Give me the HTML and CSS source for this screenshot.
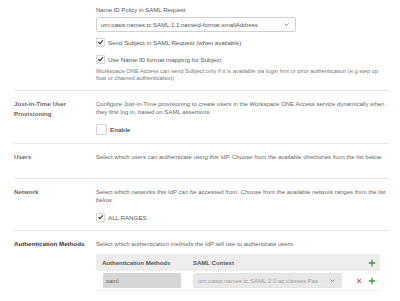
FILE: index.html
```html
<!DOCTYPE html>
<html lang="en">
<head>
  <meta charset="UTF-8" />
  <meta name="viewport" content="width=device-width, initial-scale=1" />
  <title>SAML Identity Provider</title>
  <link rel="stylesheet" href="styles.css">
</head>
<body>
  <div class="page">

    <section class="row row-top">
      <div class="row-label"></div>
      <div class="row-body">
        <div class="field-label">Name ID Policy in SAML Request</div>
        <div class="select">
          <span class="select-text">urn:oasis:names:tc:SAML:1.1:nameid-format:emailAddress</span>
          <svg class="chevron" viewBox="0 0 10 6"><path d="M1 1 L5 5 L9 1" /></svg>
        </div>
        <label class="check first">
          <span class="box checked"><svg viewBox="0 0 10 10"><path d="M2 5.2 L4.2 7.4 L8.3 2.6" /></svg></span>
          Send Subject in SAML Request (when available)
        </label>
        <label class="check second">
          <span class="box checked"><svg viewBox="0 0 10 10"><path d="M2 5.2 L4.2 7.4 L8.3 2.6" /></svg></span>
          Use Name ID format mapping for Subject
        </label>
        <p class="help">Workspace ONE Access can send Subject only if it is available via login hint or prior authentication (e.g step up flow or chained authentication)</p>
      </div>
    </section>

    <section class="row">
      <div class="row-label">Just-in-Time User Provisioning</div>
      <div class="row-body">
        <p class="desc">Configure Just-in-Time provisioning to create users in the Workspace ONE Access service dynamically when they first log in, based on SAML assertions.</p>
        <label class="check big">
          <span class="box"></span>
          <b>Enable</b>
        </label>
      </div>
    </section>

    <section class="row row-users">
      <div class="row-label">Users</div>
      <div class="row-body">
        <p class="desc">Select which users can authenticate using this IdP. Choose from the available directories from the list below.</p>
      </div>
    </section>

    <section class="row">
      <div class="row-label">Network</div>
      <div class="row-body">
        <p class="desc">Select which networks this IdP can be accessed from. Choose from the available network ranges from the list below.</p>
        <label class="check ranges">
          <span class="box checked"><svg viewBox="0 0 10 10"><path d="M2 5.2 L4.2 7.4 L8.3 2.6" /></svg></span>
          ALL RANGES
        </label>
      </div>
    </section>

    <section class="row row-last">
      <div class="row-label strong">Authentication Methods</div>
      <div class="row-body">
        <p class="desc">Select which authentication methods the IdP will use to authenticate users.</p>
        <div class="methods">
          <div class="methods-head">
            <span class="col-name">Authentication Methods</span>
            <span class="col-context">SAML Context</span>
            <span class="col-actions">
              <svg class="plus" viewBox="0 0 10 10"><path d="M5 1 V9 M1 5 H9" /></svg>
            </span>
          </div>
          <div class="methods-row">
            <span class="col-name"><span class="input">saml</span></span>
            <span class="col-context">
              <span class="select disabled">
                <span class="select-text">urn:oasis:names:tc:SAML:2.0:ac:classes:Pas</span>
                <svg class="chevron" viewBox="0 0 10 6"><path d="M1 1 L5 5 L9 1" /></svg>
              </span>
            </span>
            <span class="col-actions">
              <svg class="remove" viewBox="0 0 10 10"><path d="M2 2 L8 8 M8 2 L2 8" /></svg>
              <svg class="plus" viewBox="0 0 10 10"><path d="M5 1 V9 M1 5 H9" /></svg>
            </span>
          </div>
        </div>
      </div>
    </section>

  </div>
</body>
</html>
```

FILE: styles.css
```css
* {
  box-sizing: border-box;
}
body {
  margin: 0;
  background: #fff;
  color: #666;
  font-family: "Liberation Sans", Arial, sans-serif;
  font-size: 6px;
}
p {
  margin: 0;
}
.page {
  padding: 6px 11px 0 14px;
}
.row {
  display: grid;
  grid-template-columns: 82px 1fr;
  border-bottom: 1px solid #e6e6e6;
  padding: 9px 0 8px;
}
.row-top {
  padding-top: 0;
}
.row-users {
  padding-bottom: 16px;
}
.row-last {
  border-bottom: none;
}
.row-label {
  color: #666;
  font-size: 6.2px;
  font-weight: bold;
  line-height: 10px;
  margin-top: -1px;
  padding-right: 14px;
}
.row-label.strong {
  color: #333;
  padding-right: 0;
  white-space: nowrap;
}
.field-label {
  color: #555;
  line-height: 8px;
  margin-bottom: 3px;
}
.select {
  display: flex;
  align-items: center;
  width: 200px;
  height: 15px;
  border: 1px solid #d0d0d0;
  border-radius: 2px;
  padding: 0 6px 0 4px;
  background: #fff;
  color: #555;
}
.select-text {
  flex: 1;
  white-space: nowrap;
  overflow: hidden;
}
.chevron {
  width: 5px;
  height: 3px;
  margin-left: 4px;
  fill: none;
  stroke: #666;
  stroke-width: 1.4;
}
.check {
  display: flex;
  align-items: center;
  gap: 3px;
  height: 10px;
  color: #555;
  font-size: 6.2px;
}
.check.first {
  margin-top: 5px;
}
.check.second {
  margin-top: 7px;
}
.check.big {
  height: 12px;
  margin-top: 7px;
}
.check.big b {
  color: #555;
}
.check.ranges {
  margin-top: 8px;
}
.box {
  width: 9px;
  height: 9px;
  border: 1px solid #d4d4d4;
  border-radius: 1px;
  background: #fff;
  display: flex;
  align-items: center;
  justify-content: center;
}
.big .box {
  width: 11px;
  height: 11px;
}
.box svg {
  width: 8px;
  height: 8px;
  fill: none;
  stroke: #333;
  stroke-width: 1.6;
}
.help {
  margin-top: 4px;
  font-size: 5.75px;
  line-height: 7px;
  color: #777;
}
.desc {
  line-height: 8px;
}
.methods {
  margin-top: 6px;
  width: 284px;
}
.methods-head,
.methods-row {
  display: grid;
  grid-template-columns: 97px 149px 1fr;
  align-items: center;
}
.methods-head {
  height: 17px;
  background: #ededed;
  font-weight: bold;
  color: #555;
}
.methods-head .col-name {
  padding-left: 6px;
}
.methods-row {
  height: 20px;
  border-bottom: 1px solid #f0f0f0;
}
.methods-row .col-name {
  padding-left: 7px;
}
.input {
  display: flex;
  align-items: center;
  width: 78px;
  height: 15px;
  padding-left: 3px;
  background: #d6d6d6;
  color: #666;
}
.select.disabled {
  width: 149px;
  border-color: #e2e2e2;
  background: #e8e8e8;
  color: #a0a0a0;
}
.col-actions {
  display: flex;
  justify-content: flex-end;
  align-items: center;
  gap: 6px;
  padding-right: 4px;
}
.plus {
  width: 8px;
  height: 8px;
  fill: none;
  stroke: #3c9a3c;
  stroke-width: 1.6;
}
.remove {
  width: 6px;
  height: 6px;
  fill: none;
  stroke: #e06060;
  stroke-width: 1.8;
}
```
